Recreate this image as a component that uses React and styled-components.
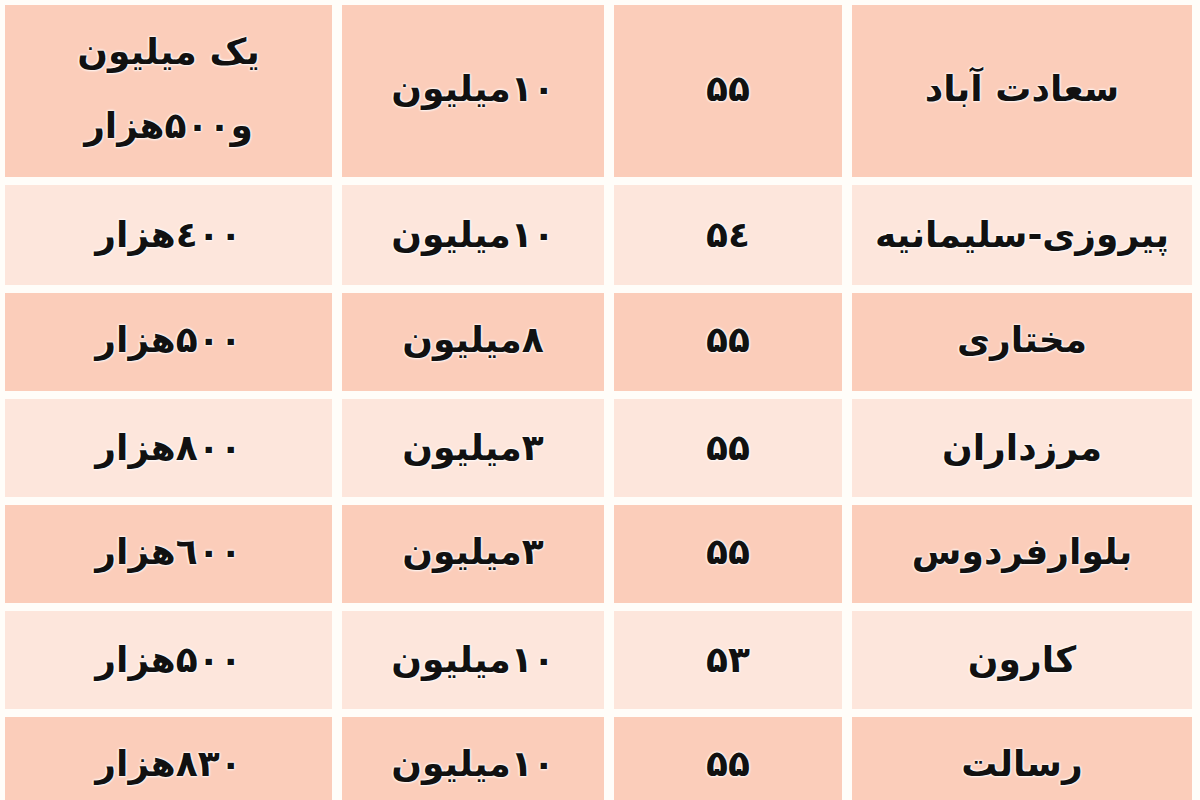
import React from "react";
import styled, { createGlobalStyle } from "styled-components";

const Global = createGlobalStyle`
  html, body { margin: 0; padding: 0; background: #ffffff; }
  body { width: 1200px; height: 800px; overflow: hidden; }
`;

const Page = styled.div`
  width: 1200px;
  height: 800px;
  overflow: hidden;
  background: #fffdf9;
  padding: 5px 8px 0 5px;
  box-sizing: border-box;
`;

const Table = styled.div`
  direction: rtl;
  display: grid;
  grid-template-columns: 340px 228px 262px 327px;
  grid-template-rows: 172px 100px repeat(5, 98px);
  column-gap: 10px;
  row-gap: 8px;
  width: 1187px;
`;

const Cell = styled.div`
  background: ${(p) => (p.$light ? "#fde6dc" : "#fbcdba")};
  display: flex;
  flex-direction: column;
  align-items: center;
  justify-content: center;
  font-family: "DejaVu Sans", sans-serif;
  font-weight: bold;
  font-size: 36px;
  line-height: 74px;
  color: #111;
  text-align: center;
  text-shadow: 0 0 3px #fff, 0 0 3px #fff, 0 0 2px #fff;
  padding-bottom: ${(p) => (p.$light ? "0" : "4px")};
  box-sizing: border-box;
`;

const Line = styled.span`
  display: block;
`;

const rows = [
  ["سعادت آباد", "۵۵", "۱۰میلیون", ["یک میلیون", "و۵۰۰هزار"]],
  ["پیروزی-سلیمانیه", "۵٤", "۱۰میلیون", "٤۰۰هزار"],
  ["مختاری", "۵۵", "۸میلیون", "۵۰۰هزار"],
  ["مرزداران", "۵۵", "۳میلیون", "۸۰۰هزار"],
  ["بلوارفردوس", "۵۵", "۳میلیون", "٦۰۰هزار"],
  ["کارون", "۵۳", "۱۰میلیون", "۵۰۰هزار"],
  ["رسالت", "۵۵", "۱۰میلیون", "۸۳۰هزار"],
];

export default function App() {
  return (
    <Page>
      <Global />
      <Table>
        {rows.map((r, i) =>
          r.map((c, j) => (
            <Cell key={`${i}-${j}`} $light={i % 2 === 1}>
              {Array.isArray(c) ? c.map((l) => <Line key={l}>{l}</Line>) : c}
            </Cell>
          ))
        )}
      </Table>
    </Page>
  );
}
